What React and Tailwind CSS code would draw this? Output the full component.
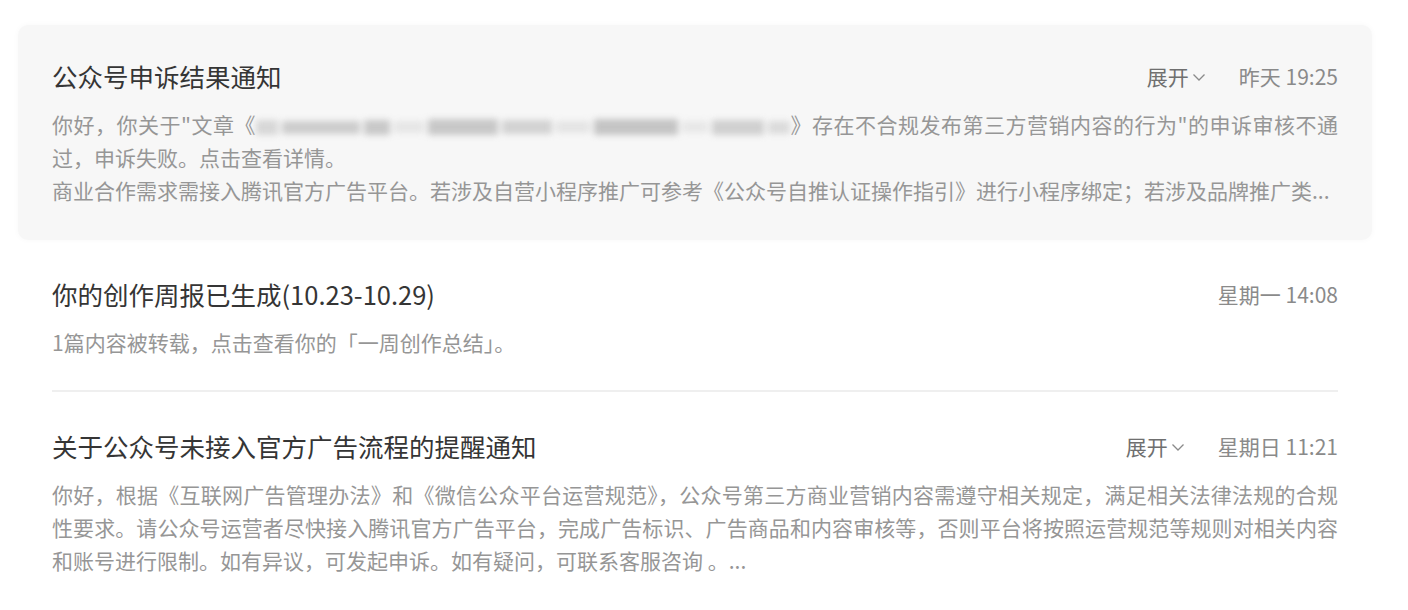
import { useState } from "react";

const notices = [
	{
		id: 1,
		title: "公众号申诉结果通知",
		time: "昨天 19:25",
		expandable: true,
		lines: [
			{ blurred: true, before: "你好，你关于\"文章《", after: "》存在不合规发布第三方营销内容的行为\"的申诉审核不通" },
			{ text: "过，申诉失败。点击查看详情。", last: true },
			{ text: "商业合作需求需接入腾讯官方广告平台。若涉及自营小程序推广可参考《公众号自推认证操作指引》进行小程序绑定；若涉及品牌推广类...", last: true },
		],
	},
	{
		id: 2,
		title: "你的创作周报已生成(10.23-10.29)",
		time: "星期一 14:08",
		expandable: false,
		lines: [{ text: "1篇内容被转载，点击查看你的「一周创作总结」。", last: true }],
	},
	{
		id: 3,
		title: "关于公众号未接入官方广告流程的提醒通知",
		time: "星期日 11:21",
		expandable: true,
		lines: [
			{ text: "你好，根据《互联网广告管理办法》和《微信公众平台运营规范》，公众号第三方商业营销内容需遵守相关规定，满足相关法律法规的合规" },
			{ text: "性要求。请公众号运营者尽快接入腾讯官方广告平台，完成广告标识、广告商品和内容审核等，否则平台将按照运营规范等规则对相关内容" },
			{ text: "和账号进行限制。如有异议，可发起申诉。如有疑问，可联系客服咨询 。...", last: true },
		],
	},
];

function Chevron() {
	return (
		<svg width="14" height="9" viewBox="0 0 14 9" fill="none" className="ml-[3px] mt-[2px]">
			<path d="M1.5 1.5 L7 7 L12.5 1.5" stroke="#8a8a8a" strokeWidth="1.3" />
		</svg>
	);
}

// 打码的文章标题
function BlurredTitle() {
	return (
		<span className="inline-flex items-center gap-[4px] w-[534px] h-[22px] align-middle blur-[3px] opacity-80">
			<span className="h-[15px] w-[22px] bg-[#cfcfcf]" />
			<span className="h-[13px] w-[78px] bg-[#c2c2c2]" />
			<span className="h-[15px] w-[26px] bg-[#bdbdbd]" />
			<span className="h-[12px] w-[30px] bg-[#e2e2e2]" />
			<span className="h-[16px] w-[70px] bg-[#bcbcbc]" />
			<span className="h-[14px] w-[50px] bg-[#c9c9c9]" />
			<span className="h-[12px] w-[34px] bg-[#e0e0e0]" />
			<span className="h-[16px] w-[84px] bg-[#b8b8b8]" />
			<span className="h-[12px] w-[26px] bg-[#e4e4e4]" />
			<span className="h-[15px] w-[52px] bg-[#c6c6c6]" />
			<span className="h-[13px] w-[22px] bg-[#d4d4d4]" />
		</span>
	);
}

function NoticeItem({ notice, hovered, showDivider, onEnter }) {
	return (
		<div
			onMouseEnter={onEnter}
			className={`relative px-[34px] pt-[32px] pb-[33px] rounded-[10px] ${
				hovered ? "bg-[#f7f7f7] shadow-[0_0_6px_rgba(0,0,0,0.03)]" : "bg-white"
			}`}>
			<div className="flex items-center justify-between h-[38px]">
				<h3 className="text-[25.5px] leading-[38px] text-[#353535] font-normal">
					{notice.title}
				</h3>
				<div className="flex items-center text-[21px] leading-[36px]">
					{notice.expandable && (
						<span className="flex items-center text-[#6f6f6f] mr-[33px] cursor-pointer">
							展开
							<Chevron />
						</span>
					)}
					<span className="text-[#8a8a8a]">{notice.time}</span>
				</div>
			</div>
			<div className="mt-[13px] text-[21px] leading-[33px] text-[#969696]">
				{notice.lines.map((line, i) =>
					line.blurred ? (
						<p key={i} className="whitespace-nowrap text-justify [text-align-last:justify]">
							{line.before}
							<BlurredTitle />
							{line.after}
						</p>
					) : (
						<p
							key={i}
							className={`whitespace-nowrap ${
								line.last ? "" : "text-justify [text-align-last:justify]"
							}`}>
							{line.text}
						</p>
					)
				)}
			</div>
			{showDivider && (
				<div className="absolute left-[34px] right-[34px] bottom-0 h-[2px] bg-[#efefef]" />
			)}
		</div>
	);
}

export default function App() {
	const [hoveredId, setHoveredId] = useState(1);

	return (
		<div
			className="min-h-screen bg-white pl-[18px] pr-[36px] pt-[25px]"
			style={{ fontFamily: '"Noto Sans CJK SC", "Noto Sans", sans-serif' }}>
			<div className="flex flex-col gap-[3px]">
				{notices.map((notice, idx) => (
					<NoticeItem
						key={notice.id}
						notice={notice}
						hovered={hoveredId === notice.id}
						showDivider={
							idx < notices.length - 1 &&
							hoveredId !== notice.id &&
							hoveredId !== notices[idx + 1].id
						}
						onEnter={() => setHoveredId(notice.id)}
					/>
				))}
			</div>
		</div>
	);
}
